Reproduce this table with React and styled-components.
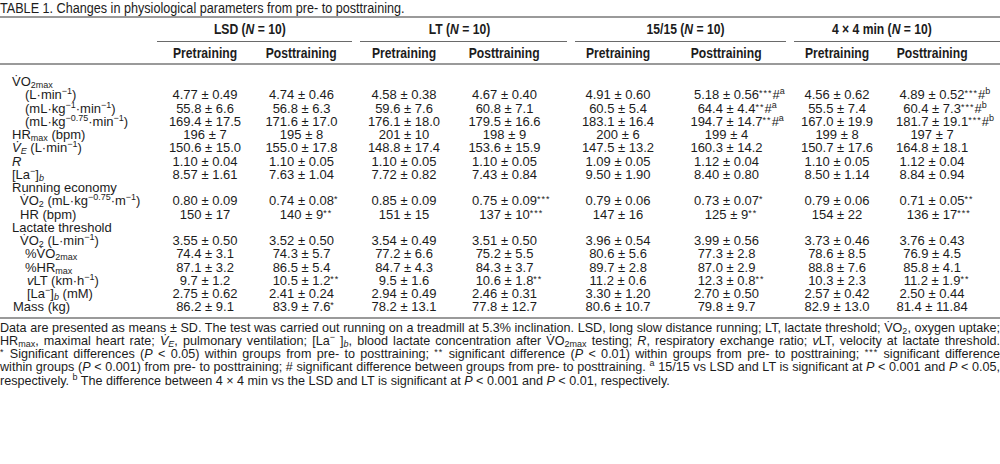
import React from 'react'
import styled, { createGlobalStyle } from 'styled-components'

const GlobalStyle = createGlobalStyle`
  body {
    margin: 0;
    background: #fff;
    color: #1c1c1c;
    font-family: "Liberation Sans", Arial, sans-serif;
  }
`

// no condensed face is installed, so the condensed type of the caption
// and the column heads is squeezed horizontally
const SQUEEZE = 0.82

const Page = styled.div`
  width: 1000px;
  overflow: hidden;
`

const Narrow = styled.span`
  display: inline-block;
  transform: scaleX(${SQUEEZE});
  transform-origin: ${p => p.$origin || 'center'};
  white-space: nowrap;
`

const Caption = styled.div`
  font-size: 15.4px;
  line-height: 16px;
  height: 16px;
  white-space: nowrap;
`

const Table = styled.table`
  width: 1000px;
  table-layout: fixed;
  border-collapse: collapse;
  border-top: 2px solid #9a9a9a;
  border-bottom: 2px solid #9a9a9a;
  font-size: 13px;
`

const GroupHead = styled.th`
  padding: 2px ${p => (p.$last ? 0 : 4)}px 0 ${p => (p.$first ? 0 : 4)}px;
`

const GroupLabel = styled.div`
  font-size: 14.8px;
  font-weight: bold;
  line-height: 18px;
  padding: 0 ${p => p.$pr}px 3px ${p => p.$pl}px;
  border-bottom: 1px solid #6a6a6a;
  text-align: center;
  white-space: nowrap;
`

const SubRow = styled.tr`
  border-bottom: 2px solid #9a9a9a;
`

const SubHead = styled.th`
  font-size: 14.8px;
  font-weight: bold;
  line-height: 18px;
  padding: 2px ${p => p.$shift || 0}px 1px 0;
  text-align: center;
  white-space: nowrap;
`

const Row = styled.tr`
  &:first-child td {
    padding-top: 10px;
  }
  &:last-child td {
    padding-bottom: 3px;
  }
`

const LabelCell = styled.td`
  padding: 0 0 0 ${p => p.$indent}px;
  line-height: 13.25px;
  height: 13.25px;
  white-space: nowrap;
`

const ValueCell = styled.td`
  padding: 0 ${p => p.$shift}px 0 0;
  line-height: 13.25px;
  text-align: center;
  white-space: nowrap;
`

const Hang = styled.span`
  display: inline-block;
  width: 0;
  text-align: left;
  white-space: nowrap;
`

const Stars = styled.span`
  font-size: 9px;
  letter-spacing: 1px;
  vertical-align: 3px;
  line-height: 0;
`

const Sub = styled.sub`
  font-size: 9px;
  vertical-align: -2px;
  line-height: 0;
`

const Sup = styled.sup`
  font-size: 9px;
  vertical-align: 5px;
  line-height: 0;
`

const Notes = styled.div`
  margin-top: 3px;
  font-size: 12.6px;
  line-height: 13.3px;
`

const NoteLine = styled.div`
  text-align: justify;
  text-align-last: ${p => (p.$last ? 'left' : 'justify')};
  white-space: nowrap;
`

// column widths: label + 8 value columns
const cols = [157, 96, 103, 96, 119, 94, 125, 94, 116]
// push the centre of some columns a little to the left
const shifts = [0, 6, 0, 14, 0, 2, 0, 20]

const groups = [
  { name: 'LSD', pl: 0, pr: 9, first: true },
  { name: 'LT', pl: 0, pr: 9 },
  { name: '15/15', pl: 9, pr: 0 },
  { name: <>4 &times; 4 min</>, pl: 0, pr: 30, last: true },
]

const V = 'V\u0307'

const rows = [
  { label: <>{V}O<Sub>2max</Sub></>, indent: 12 },
  {
    label: <>(L·min<Sup>−1</Sup>)</>, indent: 25,
    values: ['4.77 ± 0.49', '4.74 ± 0.46', '4.58 ± 0.38', '4.67 ± 0.40', '4.91 ± 0.60', '5.18 ± 0.56|***#a', '4.56 ± 0.62', '4.89 ± 0.52|***#b'],
  },
  {
    label: <>(mL·kg<Sup>−1</Sup>·min<Sup>−1</Sup>)</>, indent: 25,
    values: ['55.8 ± 6.6', '56.8 ± 6.3', '59.6 ± 7.6', '60.8 ± 7.1', '60.5 ± 5.4', '64.4 ± 4.4|**#a', '55.5 ± 7.4', '60.4 ± 7.3|***#b'],
  },
  {
    label: <>(mL·kg<Sup>−0.75</Sup>·min<Sup>−1</Sup>)</>, indent: 25,
    values: ['169.4 ± 17.5', '171.6 ± 17.0', '176.1 ± 18.0', '179.5 ± 16.6', '183.1 ± 16.4', '194.7 ± 14.7|**#a', '167.0 ± 19.9', '181.7 ± 19.1|***#b'],
  },
  {
    label: <>HR<Sub>max</Sub> (bpm)</>, indent: 12,
    values: ['196 ± 7', '195 ± 8', '201 ± 10', '198 ± 9', '200 ± 6', '199 ± 4', '199 ± 8', '197 ± 7'],
  },
  {
    label: <><i>{V}<Sub>E</Sub></i> (L·min<Sup>−1</Sup>)</>, indent: 12,
    values: ['150.6 ± 15.0', '155.0 ± 17.8', '148.8 ± 17.4', '153.6 ± 15.9', '147.5 ± 13.2', '160.3 ± 14.2', '150.7 ± 17.6', '164.8 ± 18.1'],
  },
  {
    label: <i>R</i>, indent: 12,
    values: ['1.10 ± 0.04', '1.10 ± 0.05', '1.10 ± 0.05', '1.10 ± 0.05', '1.09 ± 0.05', '1.12 ± 0.04', '1.10 ± 0.05', '1.12 ± 0.04'],
  },
  {
    label: <>[La<Sup>−</Sup>]<Sub><i>b</i></Sub></>, indent: 12,
    values: ['8.57 ± 1.61', '7.63 ± 1.04', '7.72 ± 0.82', '7.43 ± 0.84', '9.50 ± 1.90', '8.40 ± 0.80', '8.50 ± 1.14', '8.84 ± 0.94'],
  },
  { label: 'Running economy', indent: 12 },
  {
    label: <>{V}O<Sub>2</Sub> (mL·kg<Sup>−0.75</Sup>·m<Sup>−1</Sup>)</>, indent: 20,
    values: ['0.80 ± 0.09', '0.74 ± 0.08|*', '0.85 ± 0.09', '0.75 ± 0.09|***', '0.79 ± 0.06', '0.73 ± 0.07|*', '0.79 ± 0.06', '0.71 ± 0.05|**'],
  },
  {
    label: 'HR (bpm)', indent: 20,
    values: ['150 ± 17', '140 ± 9|**', '151 ± 15', '137 ± 10|***', '147 ± 16', '125 ± 9|**', '154 ± 22', '136 ± 17|***'],
  },
  { label: 'Lactate threshold', indent: 12 },
  {
    label: <>{V}O<Sub>2</Sub> (L·min<Sup>−1</Sup>)</>, indent: 20,
    values: ['3.55 ± 0.50', '3.52 ± 0.50', '3.54 ± 0.49', '3.51 ± 0.50', '3.96 ± 0.54', '3.99 ± 0.56', '3.73 ± 0.46', '3.76 ± 0.43'],
  },
  {
    label: <>%{V}O<Sub>2max</Sub></>, indent: 25,
    values: ['74.4 ± 3.1', '74.3 ± 5.7', '77.2 ± 6.6', '75.2 ± 5.5', '80.6 ± 5.6', '77.3 ± 2.8', '78.6 ± 8.5', '76.9 ± 4.5'],
  },
  {
    label: <>%HR<Sub>max</Sub></>, indent: 25,
    values: ['87.1 ± 3.2', '86.5 ± 5.4', '84.7 ± 4.3', '84.3 ± 3.7', '89.7 ± 2.8', '87.0 ± 2.9', '88.8 ± 7.6', '85.8 ± 4.1'],
  },
  {
    label: <><i>v</i>LT (km·h<Sup>−1</Sup>)</>, indent: 27,
    values: ['9.7 ± 1.2', '10.5 ± 1.2|**', '9.5 ± 1.6', '10.6 ± 1.8|**', '11.2 ± 0.6', '12.3 ± 0.8|**', '10.3 ± 2.3', '11.2 ± 1.9|**'],
  },
  {
    label: <>[La<Sup>−</Sup>]<Sub><i>b</i></Sub> (mM)</>, indent: 27,
    values: ['2.75 ± 0.62', '2.41 ± 0.24', '2.94 ± 0.49', '2.46 ± 0.31', '3.30 ± 1.20', '2.70 ± 0.50', '2.57 ± 0.42', '2.50 ± 0.44'],
  },
  {
    label: 'Mass (kg)', indent: 13,
    values: ['86.2 ± 9.1', '83.9 ± 7.6|*', '78.2 ± 13.1', '77.8 ± 12.7', '80.6 ± 10.7', '79.8 ± 9.7', '82.9 ± 13.0', '81.4 ± 11.84'],
  },
]

function Value({ text }) {
  const [main, marks] = text.split('|')
  if (!marks) return main
  const stars = marks.match(/^\**/)[0]
  const rest = marks.slice(stars.length)
  const hash = rest.startsWith('#')
  const letter = hash ? rest.slice(1) : rest
  return (
    <>
      {main}
      <Hang>
        {stars && <Stars>{stars}</Stars>}
        {hash && '#'}
        {letter && <Sup>{letter}</Sup>}
      </Hang>
    </>
  )
}

export default function App() {
  return (
    <>
      <GlobalStyle />
      <Page>
        <Caption>
          <Narrow $origin="left">TABLE 1. Changes in physiological parameters from pre- to posttraining.</Narrow>
        </Caption>
        <Table>
          <colgroup>
            {cols.map((w, i) => <col key={i} style={{ width: w }} />)}
          </colgroup>
          <thead>
            <tr>
              <GroupHead />
              {groups.map((g, i) => (
                <GroupHead key={i} colSpan={2} $first={g.first} $last={g.last}>
                  <GroupLabel $pl={g.pl} $pr={g.pr}>
                    <Narrow>{g.name} (<i>N</i> = 10)</Narrow>
                  </GroupLabel>
                </GroupHead>
              ))}
            </tr>
            <SubRow>
              <SubHead />
              {shifts.map((s, i) => (
                <SubHead key={i} $shift={s}>
                  <Narrow>{i % 2 === 0 ? 'Pretraining' : 'Posttraining'}</Narrow>
                </SubHead>
              ))}
            </SubRow>
          </thead>
          <tbody>
            {rows.map((r, i) => (
              <Row key={i}>
                <LabelCell $indent={r.indent}>{r.label}</LabelCell>
                {shifts.map((s, j) => (
                  <ValueCell key={j} $shift={s}>
                    {r.values ? <Value text={r.values[j]} /> : null}
                  </ValueCell>
                ))}
              </Row>
            ))}
          </tbody>
        </Table>
        <Notes>
          <NoteLine>
            Data are presented as means ± SD. The test was carried out running on a treadmill at 5.3% inclination. LSD, long slow distance running; LT, lactate threshold; {V}O<Sub>2</Sub>, oxygen uptake;
          </NoteLine>
          <NoteLine>
            HR<Sub>max</Sub>, maximal heart rate; <i>{V}<Sub>E</Sub></i>, pulmonary ventilation; [La<Sup>−</Sup> ]<Sub><i>b</i></Sub>, blood lactate concentration after {V}O<Sub>2max</Sub> testing; <i>R</i>, respiratory exchange ratio; <i>v</i>LT, velocity at lactate threshold.
          </NoteLine>
          <NoteLine>
            <Stars>*</Stars> Significant differences (<i>P</i> &lt; 0.05) within groups from pre- to posttraining; <Stars>**</Stars> significant difference (<i>P</i> &lt; 0.01) within groups from pre- to posttraining; <Stars>***</Stars> significant difference
          </NoteLine>
          <NoteLine>
            within groups (<i>P</i> &lt; 0.001) from pre- to posttraining; # significant difference between groups from pre- to posttraining. <Sup>a</Sup> 15/15 vs LSD and LT is significant at <i>P</i> &lt; 0.001 and <i>P</i> &lt; 0.05,
          </NoteLine>
          <NoteLine $last>
            respectively. <Sup>b</Sup> The difference between 4 &times; 4 min vs the LSD and LT is significant at <i>P</i> &lt; 0.001 and <i>P</i> &lt; 0.01, respectively.
          </NoteLine>
        </Notes>
      </Page>
    </>
  )
}
